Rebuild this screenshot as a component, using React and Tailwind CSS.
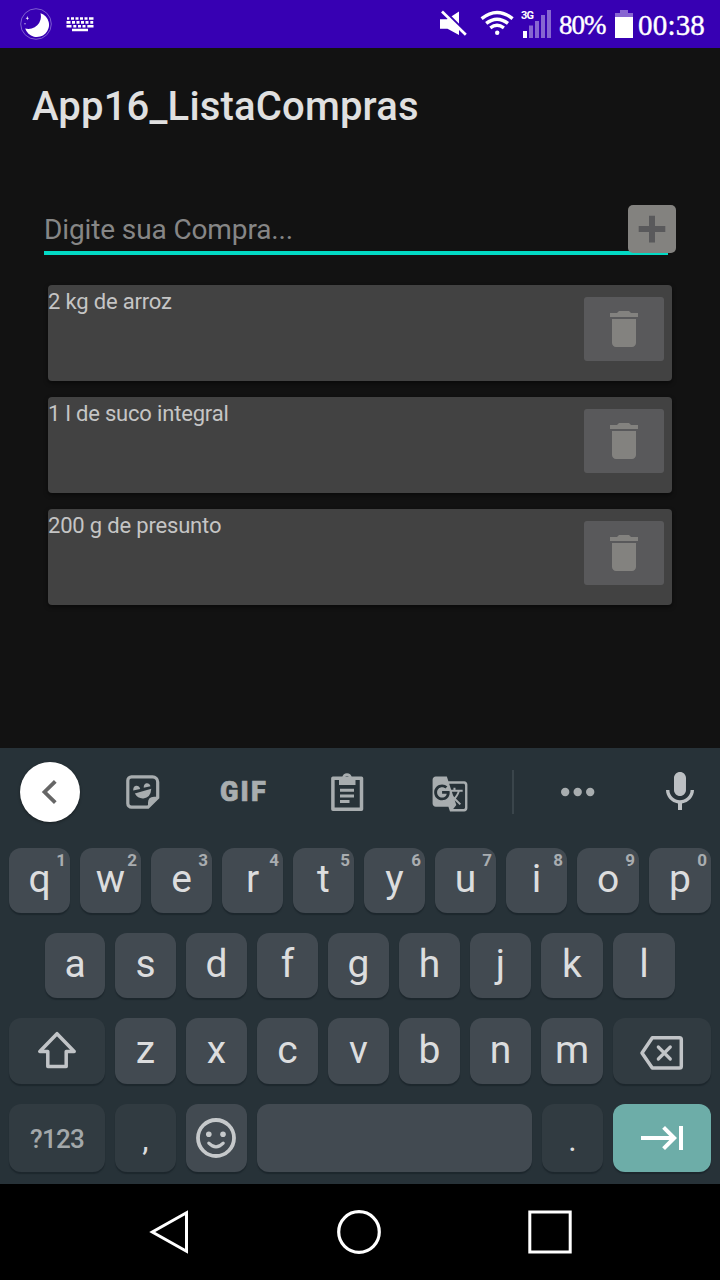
import { MdGTranslate } from 'react-icons/md';

const items = ['2 kg de arroz', '1 l de suco integral', '200 g de presunto'];

const topRow = [
  ['q', '1'], ['w', '2'], ['e', '3'], ['r', '4'], ['t', '5'],
  ['y', '6'], ['u', '7'], ['i', '8'], ['o', '9'], ['p', '0'],
];

function Key({ children, hint, className = 'w-[61px]', tone = 'bg-[#424a51]' }) {
  return (
    <div className={`relative flex h-full justify-center rounded-xl text-[39px] leading-[63px] text-[#dcddde] shadow-[0_2px_1px_#1d272d] ${tone} ${className}`}>
      {children}
      {hint && (
        <span className="absolute top-[3px] right-[4px] text-[17px] leading-[18px] font-bold text-[#a9adb0]">{hint}</span>
      )}
    </div>
  );
}

function StatusBar() {
  return (
    <header className="flex h-12 shrink-0 bg-[#3700b3] text-white">
      <svg className="ml-5 h-12 w-8" viewBox="20 0 32 48">
        <circle cx="36" cy="24" r="15.3" fill="none" stroke="#7f5fd0" strokeWidth="1" />
        <path d="M40.5 13.200A12.200 12.200 0 1 1 25.200 28.500A12.500 12.500 0 0 0 40.500 13.200Z" fill="#fff" />
        <path d="M27.300 16l.5 1.700 1.300.5-1.300.5-.5 1.600-.5-1.600-1.200-.5 1.200-.5z" fill="#fff" />
        <circle cx="25" cy="23.700" r=".8" fill="#b7a2e6" />
      </svg>
      <svg className="ml-3.5 h-12 w-7" viewBox="66 0 28 48" fill="#fff">
        <path d="M67 17.200h2.300v2.600H67zM71 17.200h3v2.600h-3zM75.500 17.200h3v2.600h-3zM80 17.200h3v2.600h-3zM84.500 17.200h3v2.600h-3zM89 17.200h4.500v2.600H89zM66.500 21h4v2.700h-4zM72 21h3v2.700h-3zM76.500 21h3v2.700h-3zM81 21h3v2.700h-3zM85.500 21h3v2.700h-3zM90.300 21h2.900v2.700h-2.900zM66.500 25h5v2.600h-5zM73.300 25h3v2.600h-3zM78 25h3v2.600h-3zM82.500 25h3v2.600h-3zM87.300 25h6.200v2.600h-6.200zM72 28.800h16v2.400H72z" />
      </svg>
      <svg className="ml-[344px] h-12 w-8" viewBox="438 0 32 48">
        <path d="M440 19.200h7L459 11.500V35L447.500 28.700H440z" fill="#fff" />
        <path d="M443.500 10.300L467 33.800" stroke="#3700b3" strokeWidth="3" />
        <path d="M442 11.500L465.800 34.800" stroke="#fff" strokeWidth="2.700" />
      </svg>
      <svg className="ml-2.5 h-12 w-[34px]" viewBox="480 0 34 48" fill="none" stroke="#fff" strokeWidth="3.400">
        <path d="M481.600 18.600Q497 6.200 512.600 18.600M486.200 23.400Q497 15 508 23.400M490.300 27.800Q497 22.800 503.900 27.800" />
        <circle cx="497.200" cy="32.800" r="2.200" fill="#fff" stroke="none" />
      </svg>
      <div className="relative ml-[7px] h-12 w-8">
        <span className="absolute top-[10px] left-0 text-[11px] leading-[11px] font-bold tracking-[-0.7px]">3G</span>
        <svg className="h-12 w-8" viewBox="521 0 32 48" fill="#8766d1">
          <path d="M523 31h4v7h-4z" fill="#fff" />
          <path d="M529 25.500h4V38h-4zM535 21h4v17h-4zM541 15h4v23h-4zM547 10h4v28h-4z" />
        </svg>
      </div>
      <span className="ml-[6px] w-[50px] font-['Liberation_Serif',serif] text-[27px] leading-[51px] tracking-[-1px] whitespace-nowrap [-webkit-text-stroke:0.4px_#fff]">80%</span>
      <svg className="ml-[5px] h-12 w-5" viewBox="614 0 20 48">
        <path d="M620 10h8v3h5v4h-18v-4h5z" fill="#8766d1" />
        <path d="M615 17h18v21h-18z" fill="#fff" />
      </svg>
      <span className="ml-[4px] font-['Liberation_Serif',serif] text-[29px] leading-[51px] tracking-[0.2px] whitespace-nowrap [-webkit-text-stroke:0.4px_#fff]">00:38</span>
    </header>
  );
}

function TrashIcon() {
  return (
    <svg className="size-12" viewBox="0 0 24 24" fill="#83827f">
      <path d="M6 19c0 1.100.9 2 2 2h8c1.100 0 2-.9 2-2V7H6v12zM19 4h-3.500l-1-1h-5l-1 1H5v2h14V4z" />
    </svg>
  );
}

function ShoppingList() {
  return (
    <main className="flex h-[700px] shrink-0 flex-col bg-[#121212]">
      <h1 className="mt-[35px] ml-8 text-[40px] leading-[48px] font-medium tracking-[0.18px] text-[#e0e0e0]">App16_ListaCompras</h1>
      <div className="relative mt-[74px] ml-11 h-[50px] w-[624px] border-b-4 border-[#03dac5]">
        <span className="block text-[28px] leading-[49px] tracking-[-0.12px] text-[#868686]">Digite sua Compra...</span>
        <button className="absolute top-0 -right-2 flex size-12 items-center justify-center rounded-[5px] bg-[#83827f]">
          <svg className="size-12" viewBox="0 0 48 48" fill="#59595b">
            <path d="M21 10.700h6v10.400h10.300v6H27v10.300h-6V27.100H10.700v-6H21z" />
          </svg>
        </button>
      </div>
      <ul className="mt-[30px] ml-12 flex w-[624px] flex-col gap-4">
        {items.map((item) => (
          <li key={item} className="flex h-24 justify-between rounded bg-[#424242] shadow-[0_2px_4px_rgba(0,0,0,0.5)]">
            <span className="pt-1 text-[22px] leading-[26px] tracking-[-0.18px] text-[#c5c5c5]">{item}</span>
            <button className="mt-3 mr-2 flex h-16 w-20 items-center justify-center rounded-[3px] bg-[#59595b]">
              <TrashIcon />
            </button>
          </li>
        ))}
      </ul>
    </main>
  );
}

function Toolbar() {
  return (
    <div className="flex h-[88px] w-full items-center">
      <div className="ml-5 flex size-[60px] items-center justify-center rounded-full bg-white shadow-[0_1px_3px_rgba(0,0,0,0.4)]">
        <svg className="size-[60px]" viewBox="20 762 60 60" fill="none" stroke="#666" strokeWidth="3.800">
          <path d="M55.300 781.300L44.500 792L55.300 802.700" />
        </svg>
      </div>
      <svg className="ml-[45px] h-9 w-9" viewBox="125 774 36 36">
        <path d="M131.500 776.800h21a5.200 5.200 0 0 1 5.200 5.200v15.500l-9.700 9.700h-16.500a3.700 3.700 0 0 1-3.700-3.700v-23a3.700 3.700 0 0 1 3.700-3.700z" fill="none" stroke="#a8adaf" strokeWidth="3.200" />
        <path d="M148 808v-5.300q0-6 6-6h5zM134.800 793.500l16.500-4.700q-.6 9-7.900 9.600-5.400.4-8.600-4.900zM133.200 790.500q-.2-4.200 2.800-4.800 3.200-.3 4.200 3.300zM143.700 787.800q-.1-4 2.800-4.600 3-.3 4 3.100z" fill="#a8adaf" />
      </svg>
      <span className="ml-[59px] w-[50px] font-['Roboto',sans-serif] text-[27px] leading-8 font-black tracking-[2.200px] text-[#a8adaf] [-webkit-text-stroke:0.7px_#a8adaf]">GIF</span>
      <svg className="ml-[59px] h-[42px] w-9" viewBox="329 771 36 42">
        <path d="M332.900 778.300h28.600v31h-28.600z" fill="none" stroke="#a8adaf" strokeWidth="3.500" strokeLinejoin="round" />
        <path fillRule="evenodd" d="M339 777h3.300a4.800 4.800 0 0 1 9.400 0h3.800v8h-16.500zM347 776a2 2 0 1 0 0 4 2 2 0 0 0 0-4z" fill="#a8adaf" />
        <path d="M340 790.200h14M340 796h14M340 801.500h9.500" stroke="#a8adaf" strokeWidth="3" />
      </svg>
      <MdGTranslate className="mt-[3px] mr-0.5 ml-[66px] size-[38px] text-[#a8adaf]" />
      <div className="ml-[41px] h-11 w-0.5 bg-[#3a454b]" />
      <svg className="ml-[46px] h-10 w-9" viewBox="560 772 36 40" fill="#a8adaf">
        <circle cx="565.200" cy="792" r="4.200" />
        <circle cx="577.700" cy="792" r="4.200" />
        <circle cx="590.200" cy="792" r="4.200" />
      </svg>
      <svg className="ml-[60px] size-12" viewBox="0 0 24 24" fill="#bcc0c3">
        <path d="M12 14c1.660 0 2.990-1.340 2.990-3L15 5c0-1.660-1.340-3-3-3S9 3.340 9 5v6c0 1.660 1.340 3 3 3zm5.300-3c0 3-2.540 5.100-5.300 5.100S6.700 14 6.700 11H5c0 3.410 2.720 6.230 6 6.720V21h2v-3.280c3.280-.48 6-3.300 6-6.720h-1.700z" />
      </svg>
    </div>
  );
}

function Keyboard() {
  return (
    <section className="flex h-[436px] shrink-0 flex-col bg-[#273238]">
      <Toolbar />
      <div className="mt-3 ml-[9px] flex h-[65px] gap-2.5">
        {topRow.map(([letter, hint]) => (
          <Key key={letter} hint={hint} className={'op'.includes(letter) ? 'w-[62px]' : 'w-[61px]'}>{letter}</Key>
        ))}
      </div>
      <div className="mt-5 ml-[45px] flex h-[65px] gap-2.5">
        {[...'asdfghjkl'].map((letter) => (
          <Key key={letter} className={letter === 'a' ? 'w-[60px]' : 'kl'.includes(letter) ? 'w-[62px]' : 'w-[61px]'}>{letter}</Key>
        ))}
      </div>
      <div className="mt-5 ml-[9px] flex h-[66px] gap-2.5">
        <Key className="w-24" tone="bg-[#313b41]">
          <svg className="h-[66px] w-24" viewBox="9 1018 96 66">
            <path d="M57 1033.700L39.800 1051.500H47.800V1066.500H66.200V1051.500H74.200Z" fill="none" stroke="#c1c4c7" strokeWidth="3.500" strokeLinejoin="round" />
          </svg>
        </Key>
        {[...'zxcvbnm'].map((letter) => (
          <Key key={letter} className={letter === 'm' ? 'w-[62px] pt-px' : 'w-[61px] pt-px'}>{letter}</Key>
        ))}
        <Key className="w-[98px]" tone="bg-[#313b41]">
          <svg className="h-[66px] w-[98px]" viewBox="613 1018 98 66" fill="none" stroke="#c1c4c7" strokeWidth="3.500" strokeLinejoin="round">
            <path d="M652.300 1037.700H679.500a1.800 1.800 0 0 1 1.800 1.800V1066.300a1.800 1.800 0 0 1-1.800 1.800H652.300L642 1052.900Z" />
            <path d="M658.300 1047L670.300 1059M670.300 1047L658.300 1059" strokeLinecap="round" strokeWidth="3.200" />
          </svg>
        </Key>
      </div>
      <div className="mt-5 ml-[9px] flex h-[68px] gap-2.5">
        <Key className="w-24" tone="bg-[#313b41]">
          <span className="text-[26px] leading-[71px] font-medium tracking-[-0.8px] text-[#a3a8aa]">?123</span>
        </Key>
        <Key tone="bg-[#313b41]">
          <span className="text-[32px] leading-[71px]">,</span>
        </Key>
        <Key>
          <svg className="h-[68px] w-[61px]" viewBox="186 1104 61 68" fill="none" stroke="#c6c9cb" strokeWidth="3.800">
            <circle cx="216" cy="1138" r="18" />
            <path d="M208.800 1143.200Q216 1150.600 223.200 1143.200" strokeWidth="3.200" strokeLinecap="round" />
            <circle cx="208.800" cy="1134.300" r="2.800" fill="#c6c9cb" stroke="none" />
            <circle cx="223" cy="1134.300" r="2.800" fill="#c6c9cb" stroke="none" />
          </svg>
        </Key>
        <Key className="w-[275px]" />
        <Key tone="bg-[#313b41]">
          <span className="text-[32px] leading-[73px]">.</span>
        </Key>
        <Key className="w-[98px]" tone="bg-[#6dada8]">
          <svg className="mt-2.5 ml-0.5 size-12" viewBox="0 0 24 24" fill="#fff">
            <path d="M11.590 7.410L15.170 11H1v2h14.170l-3.590 3.590L13 18l6-6-6-6-1.410 1.410zM20 6v12h2V6h-2z" />
          </svg>
        </Key>
      </div>
    </section>
  );
}

function NavBar() {
  return (
    <nav className="flex h-24 shrink-0 items-center bg-black">
      <svg className="ml-[146px] size-12" viewBox="146 1208 48 48" fill="none" stroke="#fff" strokeWidth="3">
        <path d="M186.500 1212.800V1251.200L152.300 1232Z" />
      </svg>
      <svg className="ml-[141px] size-12" viewBox="335 1208 48 48" fill="none" stroke="#fff" strokeWidth="3.200">
        <circle cx="359" cy="1232" r="20.300" />
      </svg>
      <svg className="ml-[143px] size-12" viewBox="526 1208 48 48" fill="none" stroke="#fff" strokeWidth="3">
        <path d="M529.800 1212H570.200V1252H529.800Z" />
      </svg>
    </nav>
  );
}

export default function App() {
  return (
    <div className="flex h-[1280px] w-[720px] flex-col overflow-hidden font-['Roboto',sans-serif]">
      <StatusBar />
      <ShoppingList />
      <Keyboard />
      <NavBar />
    </div>
  );
}
